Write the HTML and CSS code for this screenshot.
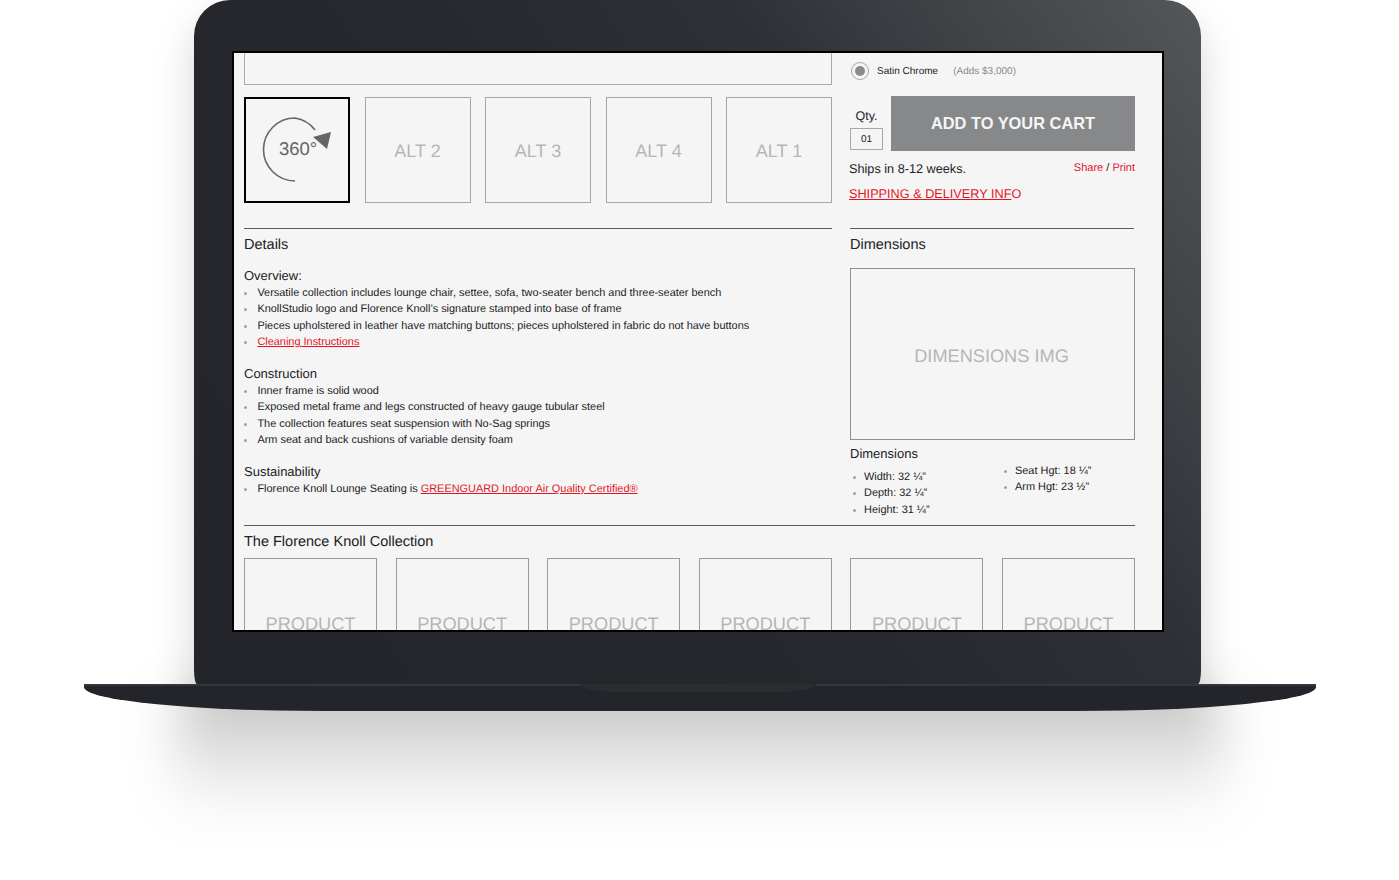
FILE: index.html
```html
<!DOCTYPE html>
<html lang="en">
<head>
    <meta charset="UTF-8">
    <title>Florence Knoll Lounge Seating</title>
    <link rel="stylesheet" href="styles.css">
</head>
<body>
    <div class="stage">
        <div class="floor-shadow"></div>
        <div class="lid">
            <div class="screen">
                <div class="columns">
                    <div class="col-left">
                        <div class="hero-box"></div>
                        <div class="alts">
                            <div class="alt alt-360">
                                <svg class="icon-360" viewBox="0 0 102 102">
                                    <path d="M49 82 A31.5 31.5 0 0 1 17.5 50.5 A31.5 31.5 0 0 1 49 19 A31 31 0 0 1 69 31" fill="none" stroke="#666" stroke-width="1.6"/>
                                    <polygon points="67,38 85,33 81,50" fill="#666"/>
                                    <text x="33" y="56" class="label-360">360°</text>
                                </svg>
                            </div>
                            <div class="alt">ALT 2</div>
                            <div class="alt">ALT 3</div>
                            <div class="alt">ALT 4</div>
                            <div class="alt">ALT 1</div>
                        </div>
                        <div class="section details">
                            <h2>Details</h2>
                            <h3>Overview:</h3>
                            <ul>
                                <li>Versatile collection includes lounge chair, settee, sofa, two-seater bench and three-seater bench</li>
                                <li>KnollStudio logo and Florence Knoll’s signature stamped into base of frame</li>
                                <li>Pieces upholstered in leather have matching buttons; pieces upholstered in fabric do not have buttons</li>
                                <li><a href="#">Cleaning Instructions</a></li>
                            </ul>
                            <h3>Construction</h3>
                            <ul>
                                <li>Inner frame is solid wood</li>
                                <li>Exposed metal frame and legs constructed of heavy gauge tubular steel</li>
                                <li>The collection features seat suspension with No-Sag springs</li>
                                <li>Arm seat and back cushions of variable density foam</li>
                            </ul>
                            <h3>Sustainability</h3>
                            <ul>
                                <li>Florence Knoll Lounge Seating is <a href="#">GREENGUARD Indoor Air Quality Certified®</a></li>
                            </ul>
                        </div>
                    </div>
                    <div class="col-right">
                        <div class="finish">
                            <span class="radio"></span>
                            <span class="finish-name">Satin Chrome</span>
                            <span class="finish-price">(Adds $3,000)</span>
                        </div>
                        <div class="buy">
                            <div class="qty">
                                <span class="qty-label">Qty.</span>
                                <span class="qty-box">01</span>
                            </div>
                            <button class="cart">ADD TO YOUR CART</button>
                        </div>
                        <div class="ships">
                            <span>Ships in 8-12 weeks.</span>
                            <span class="share"><a href="#">Share</a> / <a href="#">Print</a></span>
                        </div>
                        <a class="shipping" href="#"><u>SHIPPING &amp; DELIVERY INF</u>O</a>
                        <div class="section dims">
                            <h2>Dimensions</h2>
                            <div class="dims-img">DIMENSIONS IMG</div>
                            <h3>Dimensions</h3>
                            <div class="dims-lists">
                                <ul>
                                    <li>Width: 32 ¼”</li>
                                    <li>Depth: 32 ¼”</li>
                                    <li>Height: 31 ¼”</li>
                                </ul>
                                <ul class="dims-second">
                                    <li>Seat Hgt: 18 ¼”</li>
                                    <li>Arm Hgt: 23 ½”</li>
                                </ul>
                            </div>
                        </div>
                    </div>
                </div>
                <div class="section collection">
                    <h2>The Florence Knoll Collection</h2>
                    <div class="products">
                        <div class="product">PRODUCT</div>
                        <div class="product">PRODUCT</div>
                        <div class="product">PRODUCT</div>
                        <div class="product">PRODUCT</div>
                        <div class="product">PRODUCT</div>
                        <div class="product">PRODUCT</div>
                    </div>
                </div>
            </div>
        </div>
        <div class="base">
            <div class="base-line"></div>
            <div class="notch"></div>
        </div>
    </div>
</body>
</html>
```
FILE: styles.css
```css
body {
    margin: 0;
    background: #ffffff;
    font-family: "Liberation Sans", Arial, sans-serif;
    color: #222222;
    text-rendering: geometricPrecision;
}
.stage {
    position: relative;
    width: 1399px;
    height: 880px;
    overflow: hidden;
}
.floor-shadow {
    position: absolute;
    left: 175px;
    top: 695px;
    width: 1050px;
    height: 125px;
    background: linear-gradient(to bottom, rgba(0, 0, 0, 0.25), rgba(0, 0, 0, 0.11) 45%, rgba(0, 0, 0, 0));
    filter: blur(26px);
}
.lid {
    position: relative;
    box-sizing: border-box;
    width: 1007px;
    height: 684px;
    margin-left: 194px;
    padding: 51px 0 0 38px;
    border-radius: 36px 36px 3px 3px / 36px 36px 14px 14px;
    background: linear-gradient(235deg, #54575a 0%, #44474a 14%, #2e3036 32%, #26282d 55%, #23252a 100%);
    box-shadow: 0 20px 40px rgba(0, 0, 0, 0.17);
}
.screen {
    box-sizing: border-box;
    width: 932px;
    height: 581px;
    padding: 0 27px 0 10px;
    border: 2px solid #000000;
    background: #f5f5f6;
    overflow: hidden;
}
.columns {
    display: grid;
    grid-template-columns: 588px 285px;
    gap: 18px;
}
.hero-box {
    box-sizing: border-box;
    height: 32px;
    border: 1px solid #aaaaaa;
    border-top: 0;
}
.alts {
    display: flex;
    justify-content: space-between;
    margin-top: 12px;
}
.alt {
    box-sizing: border-box;
    display: flex;
    align-items: center;
    justify-content: center;
    width: 106px;
    height: 106px;
    padding-top: 3px;
    border: 1px solid #a6a6a6;
    color: #b5b5b5;
    font-size: 18px;
}
.alt-360 {
    padding-top: 0;
    border: 2px solid #000000;
}
.icon-360 {
    width: 102px;
    height: 102px;
}
.label-360 {
    fill: #666666;
    font-size: 18.5px;
}
.section {
    margin-top: 25px;
    border-top: 1px solid #5c5c5c;
}
h2 {
    margin: 8px 0 0;
    font-size: 14.5px;
    font-weight: normal;
    line-height: 16px;
}
h3 {
    margin: 16px 0 1px;
    font-size: 13px;
    font-weight: normal;
    line-height: 16px;
}
.details h3 {
    position: relative;
    top: 1px;
}
.details h2 + h3 {
    margin-top: 14px;
}
ul {
    margin: 0;
    padding: 0;
    list-style: none;
}
li {
    position: relative;
    top: 1px;
    padding-left: 13.4px;
    font-size: 10.93px;
    line-height: 16.3px;
}
li::before {
    content: "";
    position: absolute;
    left: 0;
    top: 7px;
    width: 3px;
    height: 3px;
    border-radius: 50%;
    background: #a0a0a0;
}
li a {
    color: #e2151f;
}
.finish {
    display: flex;
    align-items: center;
    height: 36px;
    padding-left: 1px;
    font-size: 10px;
}
.radio {
    box-sizing: border-box;
    display: flex;
    align-items: center;
    justify-content: center;
    width: 18px;
    height: 18px;
    margin-right: 8px;
    border: 1px solid #a8a8a8;
    border-radius: 50%;
}
.radio::after {
    content: "";
    width: 10px;
    height: 10px;
    border-radius: 50%;
    background: #8b8b8b;
}
.finish-name {
    margin-top: 1px;
}
.finish-price {
    margin: 1px 0 0 15px;
    color: #888888;
}
.buy {
    display: flex;
    align-items: flex-end;
    gap: 8px;
    margin-top: 7px;
}
.qty {
    display: flex;
    flex-direction: column;
    align-items: center;
    width: 33px;
    margin-bottom: 1px;
}
.qty-label {
    margin-bottom: 4px;
    font-size: 12.5px;
    line-height: 16px;
}
.qty-box {
    box-sizing: border-box;
    width: 33px;
    height: 22px;
    border: 1px solid #a8a8a8;
    font-size: 10px;
    line-height: 21px;
    text-align: center;
}
.cart {
    flex: 1;
    height: 55px;
    padding: 0;
    border: 0;
    background: #87888a;
    color: #f5f5f6;
    font-family: inherit;
    font-size: 16.4px;
    font-weight: bold;
}
.ships {
    display: flex;
    align-items: center;
    justify-content: space-between;
    margin: 9px 0 0 -1px;
    font-size: 12.7px;
    line-height: 18px;
}
.share {
    margin-top: -2px;
    font-size: 11px;
}
.share a {
    color: #e2151f;
    text-decoration: none;
}
.shipping {
    display: block;
    margin: 8px 0 0 -1px;
    color: #e2151f;
    font-size: 12.7px;
    line-height: 16px;
    text-decoration: none;
}
.dims {
    margin-top: 26px;
    margin-right: 1px;
}
.dims-img {
    display: flex;
    align-items: center;
    justify-content: center;
    box-sizing: border-box;
    height: 172px;
    margin: 15px -1px 0 0;
    padding: 4px 2px 0 0;
    border: 1px solid #8f8f8f;
    color: #b5b5b5;
    font-size: 18.2px;
}
.dims h3 {
    margin: 6px 0 0;
}
.dims-lists {
    display: flex;
    margin-top: 6px;
}
.dims-lists ul {
    width: 151px;
}
.dims-lists li {
    left: 3px;
    padding-left: 11px;
}
.dims-lists .dims-second {
    width: 120px;
    margin-top: -6px;
}
.collection {
    margin-top: 8px;
}
.products {
    display: flex;
    justify-content: space-between;
    margin-top: 8px;
}
.product {
    box-sizing: border-box;
    width: 133px;
    height: 150px;
    padding-top: 54px;
    border: 1px solid #9a9a9a;
    color: #b5b5b5;
    font-size: 18.2px;
    line-height: 22px;
    text-align: center;
}
.base {
    position: relative;
    width: 1232px;
    height: 27px;
    margin-left: 84px;
    border-radius: 0 0 240px 240px / 0 0 24px 24px;
    background: #24242b;
}
.base-line {
    height: 2px;
    background: #34363d;
}
.notch {
    position: absolute;
    left: 496px;
    top: 0;
    width: 237px;
    height: 8px;
    border-radius: 0 0 40px 40px / 0 0 8px 8px;
    background: #2a2c2f;
}
```
